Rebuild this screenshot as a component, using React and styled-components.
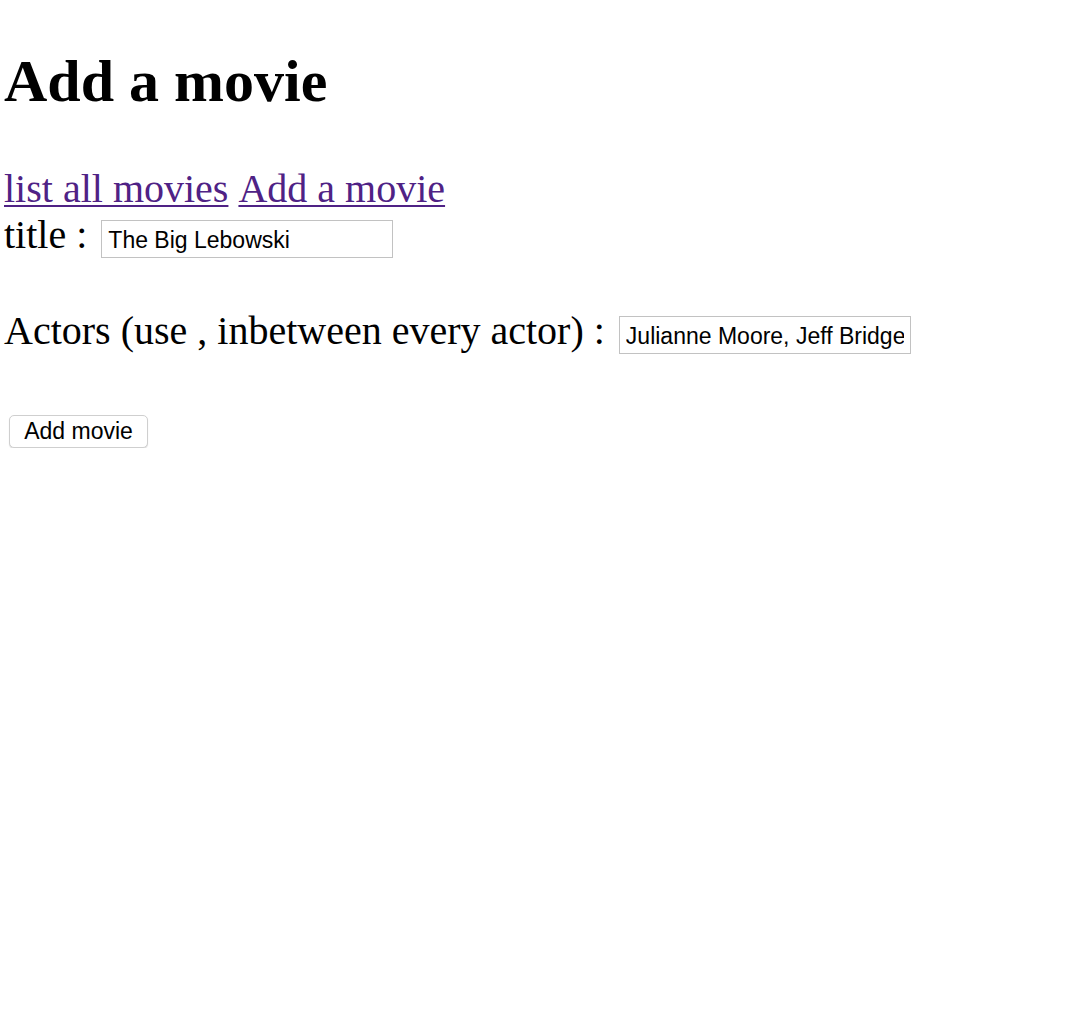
import styled, { createGlobalStyle } from 'styled-components';

const GlobalStyle = createGlobalStyle`
  body {
    margin: 0;
    background: #fff;
    color: #000;
    font-family: 'Liberation Serif', 'Times New Roman', serif;
  }
`;

const Page = styled.div`
  padding: 8px 4px 0;
`;

const Title = styled.h1`
  font-size: 60px;
  line-height: 66px;
  font-weight: bold;
  margin: 40px 0 52px;
`;

const Nav = styled.nav`
  font-size: 40px;
  line-height: 46px;
  display: flex;
  gap: 10px;
`;

const NavLink = styled.a`
  color: #4f2285;
  text-decoration: underline;
  text-decoration-thickness: 2px;
  text-underline-offset: 3px;
`;

const Form = styled.form`
  display: flex;
  flex-direction: column;
`;

const Row = styled.div`
  display: flex;
  align-items: baseline;
  gap: ${(p) => p.$gap || 14}px;
  margin-bottom: ${(p) => p.$after || 0}px;
  font-size: 40px;
  line-height: 46px;
`;

const Label = styled.label`
  white-space: nowrap;
`;

const TextInput = styled.input`
  box-sizing: border-box;
  width: 292px;
  height: 38px;
  padding: 4px 6px 0;
  border: 1px solid #c2c2c2;
  border-radius: 0;
  font-family: 'Liberation Sans', Arial, sans-serif;
  font-size: 23px;
  color: #000;
  background: #fff;
  outline: none;
`;

const SubmitButton = styled.button`
  align-self: flex-start;
  box-sizing: border-box;
  width: 139px;
  height: 33px;
  margin-left: 5px;
  padding: 0;
  background: #fff;
  border: 1px solid #cfcfcf;
  border-radius: 5px;
  box-shadow: 0 1px 1px rgba(0, 0, 0, 0.14);
  font-family: 'Liberation Sans', Arial, sans-serif;
  font-size: 23px;
  color: #000;
  cursor: pointer;
`;

export default function App() {
  return (
    <>
      <GlobalStyle />
      <Page>
        <Title>Add a movie</Title>
        <Nav>
          <NavLink href="#movies">list all movies</NavLink>
          <NavLink href="#add">Add a movie</NavLink>
        </Nav>
        <Form onSubmit={(e) => e.preventDefault()}>
          <Row $after={50} $gap={14}>
            <Label htmlFor="title">title :</Label>
            <TextInput id="title" defaultValue="The Big Lebowski" />
          </Row>
          <Row $after={61} $gap={14}>
            <Label htmlFor="actors">Actors (use , inbetween every actor) :</Label>
            <TextInput
              id="actors"
              defaultValue="Julianne Moore, Jeff Bridges, John Goodman"
            />
          </Row>
          <SubmitButton type="submit">Add movie</SubmitButton>
        </Form>
      </Page>
    </>
  );
}
